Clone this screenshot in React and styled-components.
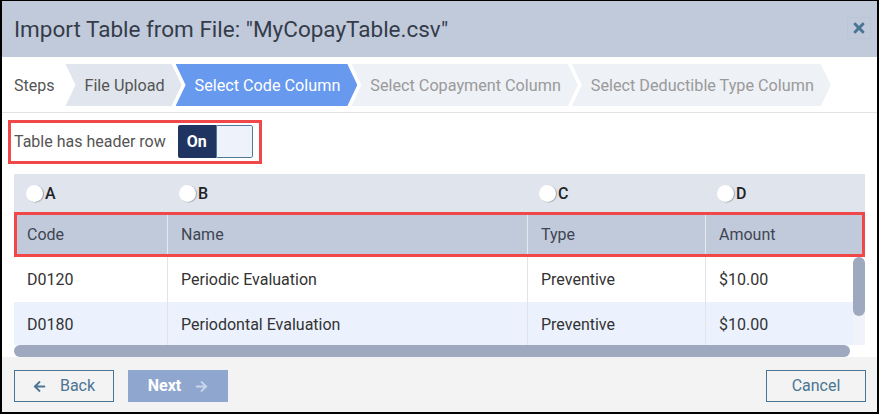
import React from "react";
import styled, { createGlobalStyle } from "styled-components";
import { FaTimes, FaArrowLeft, FaArrowRight } from "react-icons/fa";

const GlobalStyle = createGlobalStyle`
  html, body { margin: 0; padding: 0; background: #fff; }
  body { font-family: Roboto, "Noto Sans", Arial, sans-serif; }
  * { box-sizing: border-box; }
`;

const Dialog = styled.div`
  width: 879px;
  height: 414px;
  border-style: solid;
  border-color: #000;
  border-width: 1px 2px 2px 2px;
  display: flex;
  flex-direction: column;
  overflow: hidden;
  background: #fff;
`;

const Header = styled.div`
  height: 56px;
  flex: none;
  background: #c1cadb;
  display: flex;
  align-items: center;
  justify-content: space-between;
  padding: 0 6px 0 12px;
`;

const Title = styled.h1`
  margin: 0;
  font-size: 22.5px;
  font-weight: 400;
  color: #343c4a;
`;

const CloseButton = styled.button`
  width: 24px;
  height: 22px;
  border: 1px solid #bcc5d6;
  background: transparent;
  color: #4a7494;
  display: flex;
  align-items: center;
  justify-content: center;
  padding: 0;
  margin-top: -2px;
  cursor: pointer;
`;

const StepsBar = styled.div`
  flex: none;
  display: flex;
  align-items: center;
  padding: 7px 12px 6px;
  border-bottom: 1px solid #e2e2e2;
`;

const StepsLabel = styled.span`
  font-size: 16px;
  color: #555;
  margin-right: 11px;
`;

const Step = styled.div`
  height: 42px;
  display: flex;
  align-items: center;
  padding: 0 17px 0 19px;
  margin-right: -6px;
  font-size: 16.2px;
  white-space: nowrap;
  clip-path: polygon(0 0, calc(100% - 10px) 0, 100% 50%, calc(100% - 10px) 100%, 0 100%, 10px 50%);
  background: ${(p) => (p.$state === "active" ? "#6799ef" : p.$state === "done" ? "#e0e5ee" : "#eef1f6")};
  color: ${(p) => (p.$state === "active" ? "#fff" : p.$state === "done" ? "#555" : "#9a9a9a")};
`;

const Body = styled.div`
  flex: none;
  display: flex;
  flex-direction: column;
  padding: 7px 12px 0 12px;
`;

const ToggleRow = styled.div`
  align-self: flex-start;
  display: flex;
  align-items: center;
  margin-left: -6px;
  border: 3px solid #f04848;
  padding: 2px 6px 3px 3px;
  gap: 12px;
`;

const ToggleLabel = styled.span`
  font-size: 16px;
  color: #555;
`;

const Toggle = styled.div`
  display: flex;
  height: 33px;
  width: 75px;
  border-radius: 2px;
  overflow: hidden;
`;

const ToggleOn = styled.div`
  width: 38px;
  background: #1f3461;
  color: #fff;
  font-weight: 700;
  font-size: 16px;
  display: flex;
  align-items: center;
  justify-content: center;
`;

const ToggleOff = styled.div`
  flex: 1;
  background: #eef2fa;
  border: 1px solid #4f7a9a;
  border-radius: 0 2px 2px 0;
`;

const Table = styled.div`
  margin-top: 10px;
  display: flex;
  flex-direction: column;
`;

const cols = "153px 360px 178px 1fr";

const RadioRow = styled.div`
  display: grid;
  grid-template-columns: ${cols};
  height: 38px;
  background: #dfe4ed;
`;

const RadioCell = styled.label`
  display: flex;
  align-items: center;
  padding-left: 12px;
  gap: 2px;
  font-size: 16px;
  font-weight: 500;
  color: #222;
`;

const RadioCircle = styled.span`
  width: 17px;
  height: 17px;
  border-radius: 50%;
  background: #fff;
  box-shadow: 1px 0.5px 1px rgba(0, 0, 0, 0.28);
`;

const HeadRow = styled.div`
  display: grid;
  grid-template-columns: ${cols};
  height: 45px;
  background: #c1cadb;
  outline: 3px solid #f04848;
  outline-offset: -3px;
  position: relative;
`;

const HeadCell = styled.div`
  display: flex;
  align-items: center;
  padding-left: 13px;
  font-size: 16px;
  color: #3e4552;
  border-left: ${(p) => (p.$first ? "none" : "1px solid #e6e9f0")};
`;

const BodyWrap = styled.div`
  display: flex;
  height: 88px;
`;

const Rows = styled.div`
  flex: 1;
  overflow: hidden;
`;

const Row = styled.div`
  display: grid;
  grid-template-columns: ${cols};
  height: 45px;
  background: ${(p) => (p.$alt ? "#ebf2fd" : "#fff")};
`;

const Cell = styled.div`
  display: flex;
  align-items: center;
  padding-left: 13px;
  font-size: 16px;
  color: #333;
  border-left: ${(p) => (p.$first ? "none" : "1px solid #dfe3ea")};
`;

const VTrack = styled.div`
  width: 12px;
  background: linear-gradient(#fff 0 45px, #f0f3fa 45px);
  display: flex;
  flex-direction: column;
`;

const VThumb = styled.div`
  height: 59px;
  width: 12px;
  border-radius: 6px;
  background: #9ea9bf;
`;

const HTrack = styled.div`
  height: 12px;
  background: #fff;
  display: flex;
`;

const HThumb = styled.div`
  width: 836px;
  height: 12px;
  border-radius: 6px;
  background: #9ea9bf;
`;

const Footer = styled.div`
  flex: 1;
  background: #f3f3f3;
  display: flex;
  align-items: flex-start;
  justify-content: space-between;
  padding: 13px 11px 0 12px;
`;

const FooterLeft = styled.div`
  display: flex;
  gap: 14px;
`;

const Button = styled.button`
  width: 100px;
  height: 32px;
  font-family: inherit;
  font-size: 16px;
  line-height: 20px;
  display: flex;
  align-items: center;
  justify-content: center;
  gap: 14px;
  border: 1px solid ${(p) => (p.$primary ? "#8fa6cf" : "#4a7494")};
  background: ${(p) => (p.$primary ? "#8fa6cf" : "transparent")};
  color: ${(p) => (p.$primary ? "#fff" : "#4a7494")};
  font-weight: ${(p) => (p.$primary ? 700 : 400)};
  padding: 0;
  cursor: pointer;
`;

const ArrowWrap = styled.span`
  display: flex;
  color: ${(p) => p.$color || "inherit"};
`;

const columns = ["A", "B", "C", "D"];
const headers = ["Code", "Name", "Type", "Amount"];
const data = [
  ["D0120", "Periodic Evaluation", "Preventive", "$10.00"],
  ["D0180", "Periodontal Evaluation", "Preventive", "$10.00"],
];

export default function App() {
  return (
    <>
      <GlobalStyle />
      <Dialog>
        <Header>
          <Title>Import Table from File: "MyCopayTable.csv"</Title>
          <CloseButton aria-label="Close">
            <FaTimes size={16} />
          </CloseButton>
        </Header>
        <StepsBar>
          <StepsLabel>Steps</StepsLabel>
          <Step $state="done">File Upload</Step>
          <Step $state="active">Select Code Column</Step>
          <Step $state="todo">Select Copayment Column</Step>
          <Step $state="todo">Select Deductible Type Column</Step>
        </StepsBar>
        <Body>
          <ToggleRow>
            <ToggleLabel>Table has header row</ToggleLabel>
            <Toggle>
              <ToggleOn>On</ToggleOn>
              <ToggleOff />
            </Toggle>
          </ToggleRow>
          <Table>
            <RadioRow>
              {columns.map((c) => (
                <RadioCell key={c}>
                  <RadioCircle />
                  {c}
                </RadioCell>
              ))}
            </RadioRow>
            <HeadRow>
              {headers.map((h, i) => (
                <HeadCell key={h} $first={i === 0}>
                  {h}
                </HeadCell>
              ))}
            </HeadRow>
            <BodyWrap>
              <Rows>
                {data.map((r, ri) => (
                  <Row key={ri} $alt={ri % 2 === 1}>
                    {r.map((v, i) => (
                      <Cell key={i} $first={i === 0}>
                        {v}
                      </Cell>
                    ))}
                  </Row>
                ))}
              </Rows>
              <VTrack>
                <VThumb />
              </VTrack>
            </BodyWrap>
            <HTrack>
              <HThumb />
            </HTrack>
          </Table>
        </Body>
        <Footer>
          <FooterLeft>
            <Button>
              <ArrowWrap>
                <FaArrowLeft size={13} />
              </ArrowWrap>
              Back
            </Button>
            <Button $primary>
              Next
              <ArrowWrap $color="#c9d5eb">
                <FaArrowRight size={13} />
              </ArrowWrap>
            </Button>
          </FooterLeft>
          <Button>Cancel</Button>
        </Footer>
      </Dialog>
    </>
  );
}
